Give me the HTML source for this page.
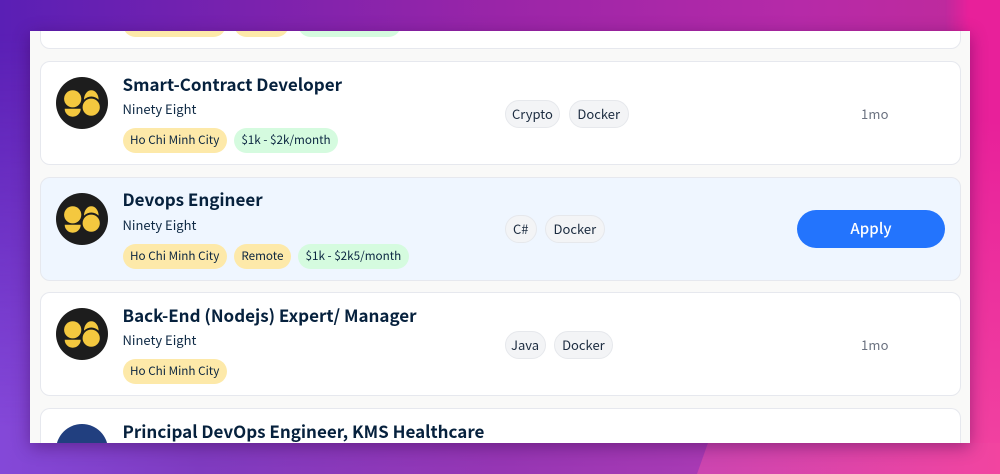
<!DOCTYPE html>
<html><head><meta charset="utf-8">
<style>
*{box-sizing:border-box;margin:0;padding:0}
html,body{width:1000px;height:474px;overflow:hidden}
body{position:relative;font-family:"Noto Sans CJK JP","Liberation Sans",sans-serif;color:#0a2540;
background:linear-gradient(90deg,#5a1fb5 0%,#7a22ae 25%,#9a25a8 50%,#b62aa8 80%,#bd2a9f 93%,#c02a9c 100%)}
#bl{position:absolute;inset:0;background:linear-gradient(90deg,#8448d8 0%,#7f3bc0 20%,#9636b4 50%,#a83ab4 70%,#b83aac 100%);
-webkit-mask-image:linear-gradient(to bottom,transparent 7%,#000 90%);mask-image:linear-gradient(to bottom,transparent 7%,#000 90%)}
#rs{position:absolute;left:945px;top:0;width:55px;height:474px;background:linear-gradient(to bottom,#e8209a 0%,#e8209a 25%,#ee389f 75%,#f244a0 100%);
-webkit-mask-image:linear-gradient(to right,transparent 0,#000 24px);mask-image:linear-gradient(to right,transparent 0,#000 24px)}
#rt{position:absolute;left:0;top:0;width:1000px;height:474px;background:linear-gradient(90deg,#cc45b0 70%,#f244a0 100%);clip-path:polygon(708px 443px,697px 474px,1000px 474px,1000px 443px)}
#win{position:absolute;left:30px;top:31px;width:940px;height:412px;background:#f9f9f8;overflow:hidden;box-shadow:0 4px 16px rgba(50,0,70,.42)}
.card{position:absolute;left:10px;width:921px;height:104px;background:#fff;border:1px solid #e6e8ee;border-radius:10px}
.card.hl{background:#eff6ff}
.logo{position:absolute;left:15px;top:15px;width:52px;height:52px}
.t{position:absolute;left:81.500px;top:9px;font-size:17px;line-height:26px;font-weight:700;white-space:nowrap;color:#06213d}
.c{position:absolute;left:81.500px;top:37px;font-size:13px;line-height:20px;white-space:nowrap;color:#0f2a45}
.tags{position:absolute;left:81.500px;top:66px;display:flex;gap:7px}
.tag{height:25px;line-height:24px;border-radius:13px;padding:0 7.500px;font-size:11.700px;white-space:nowrap;background:#fde9a9}
.tag.g{background:#d5fbdf}
.sk{position:absolute;left:463.500px;top:37px;display:flex;gap:8px}
.up{top:38px}
.s{height:28px;line-height:26px;border-radius:14px;padding:0 7.500px;font-size:13px;white-space:nowrap;background:#f3f4f6;border:1px solid #e6e8ec;color:#1c2c40}
.m{position:absolute;left:820px;top:42px;font-size:13px;line-height:20px;color:#6b7280;letter-spacing:.2px}
.b{position:absolute;left:756px;top:32px;width:148px;height:38px;border-radius:19px;background:#2374fd;color:#fff;font-size:15px;line-height:37px;text-align:center;letter-spacing:.1px;font-weight:500}
</style></head><body>
<div id="bl"></div>
<div id="rs"></div>
<div id="rt"></div>
<div id="win">
 <div class="card" style="top:-86px">
  <div class="tags"><span class="tag" style="width:103px"></span><span class="tag" style="width:55px;margin-left:1px"></span><span class="tag g" style="width:103px;margin-left:2px"></span></div>
 </div>

 <div class="card" style="top:30px">
  <svg class="logo" viewBox="0 0 52 52"><circle cx="26" cy="26" r="26" fill="#1d1d1d"/><circle cx="16.700" cy="21.800" r="8.600" fill="#f4c83f"/><path d="M8.700 31.800h16a8 7.900 0 0 1-16 0z" fill="#f4c83f"/><path d="M28 22.600A7.300 9.400 0 0 1 42.600 22.600A10.200 10.200 0 0 0 28 22.600z" fill="#f4c83f"/><circle cx="35.200" cy="30.200" r="8.600" fill="#f4c83f"/></svg>
  <div class="t">Smart-Contract Developer</div>
  <div class="c">Ninety Eight</div>
  <div class="tags"><span class="tag">Ho Chi Minh City</span><span class="tag g">$1k - $2k/month</span></div>
  <div class="sk up" style="gap:8.500px"><span class="s" style="padding:0 6.500px">Crypto</span><span class="s">Docker</span></div>
  <div class="m">1mo</div>
 </div>

 <div class="card hl" style="top:146px">
  <svg class="logo" viewBox="0 0 52 52"><circle cx="26" cy="26" r="26" fill="#1d1d1d"/><circle cx="16.700" cy="21.800" r="8.600" fill="#f4c83f"/><path d="M8.700 31.800h16a8 7.900 0 0 1-16 0z" fill="#f4c83f"/><path d="M28 22.600A7.300 9.400 0 0 1 42.600 22.600A10.200 10.200 0 0 0 28 22.600z" fill="#f4c83f"/><circle cx="35.200" cy="30.200" r="8.600" fill="#f4c83f"/></svg>
  <div class="t" style="top:8px">Devops Engineer</div>
  <div class="c">Ninety Eight</div>
  <div class="tags"><span class="tag">Ho Chi Minh City</span><span class="tag">Remote</span><span class="tag g">$1k - $2k5/month</span></div>
  <div class="sk"><span class="s" style="padding:0 7.500px">C#</span><span class="s">Docker</span></div>
  <div class="b">Apply</div>
 </div>

 <div class="card" style="top:261px">
  <svg class="logo" viewBox="0 0 52 52"><circle cx="26" cy="26" r="26" fill="#1d1d1d"/><circle cx="16.700" cy="21.800" r="8.600" fill="#f4c83f"/><path d="M8.700 31.800h16a8 7.900 0 0 1-16 0z" fill="#f4c83f"/><path d="M28 22.600A7.300 9.400 0 0 1 42.600 22.600A10.200 10.200 0 0 0 28 22.600z" fill="#f4c83f"/><circle cx="35.200" cy="30.200" r="8.600" fill="#f4c83f"/></svg>
  <div class="t">Back-End (Nodejs) Expert/ Manager</div>
  <div class="c">Ninety Eight</div>
  <div class="tags"><span class="tag">Ho Chi Minh City</span></div>
  <div class="sk up"><span class="s" style="padding:0 5.500px">Java</span><span class="s">Docker</span></div>
  <div class="m">1mo</div>
 </div>

 <div class="card" style="top:377px;height:35px;border-bottom:0;border-radius:10px 10px 0 0;overflow:hidden">
  <svg class="logo" viewBox="0 0 52 52"><circle cx="26" cy="26" r="26" fill="#213f7f"/></svg>
  <div class="t">Principal DevOps Engineer, KMS Healthcare</div>
 </div>
</div>
</body></html>
